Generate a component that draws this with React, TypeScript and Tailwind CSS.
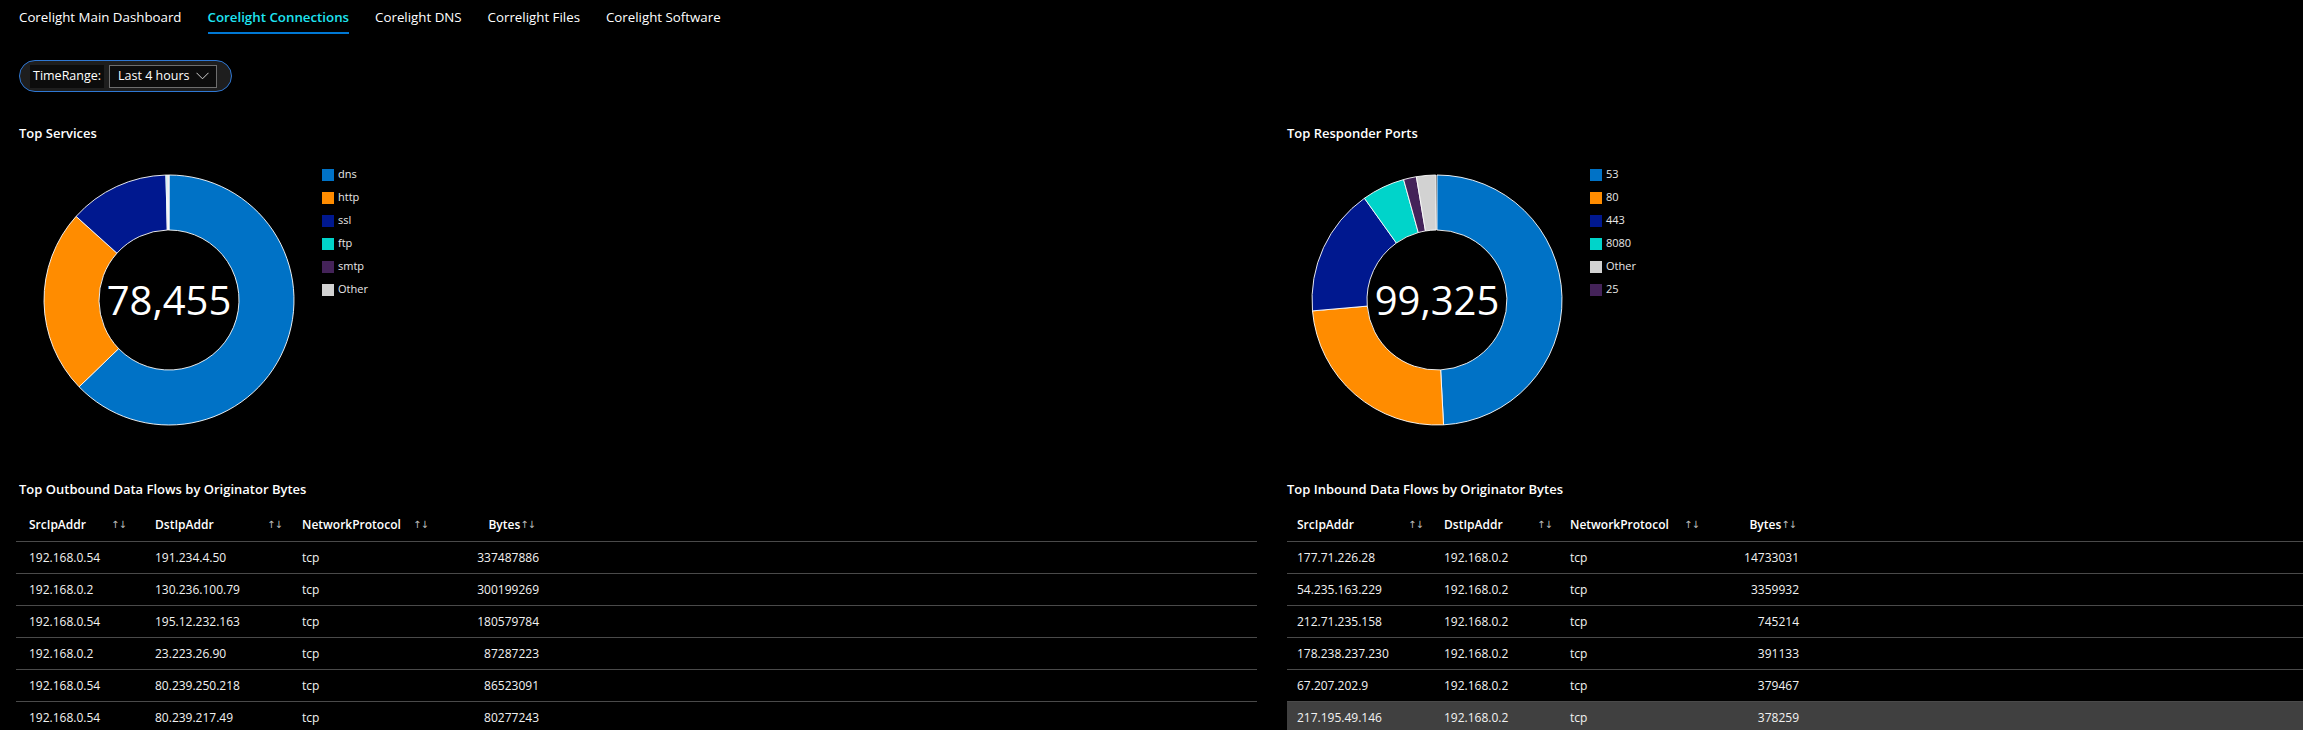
import React from 'react';

type Slice = { color: string; from: number; to: number };
type LegendItem = { label: string; color: string };
type Row = [string, string, string, string];

type Col = { w: number; pl: number; textW: number };

const tabs = [
  'Corelight Main Dashboard',
  'Corelight Connections',
  'Corelight DNS',
  'Correlight Files',
  'Corelight Software',
];

const servicesSlices: Slice[] = [
  { color: '#0072c6', from: 0, to: 226 },
  { color: '#ff8c00', from: 226, to: 312 },
  { color: '#00188f', from: 312, to: 358.6 },
  { color: '#00d4ca', from: 358.6, to: 359.1 },
  { color: '#442359', from: 359.1, to: 359.5 },
  { color: '#d2d2d2', from: 359.5, to: 360 },
];

const servicesLegend: LegendItem[] = [
  { label: 'dns', color: '#0072c6' },
  { label: 'http', color: '#ff8c00' },
  { label: 'ssl', color: '#00188f' },
  { label: 'ftp', color: '#00d4ca' },
  { label: 'smtp', color: '#442359' },
  { label: 'Other', color: '#d2d2d2' },
];

const portsSlices: Slice[] = [
  { color: '#0072c6', from: 0, to: 177 },
  { color: '#ff8c00', from: 177, to: 265 },
  { color: '#00188f', from: 265, to: 324.5 },
  { color: '#00d4ca', from: 324.5, to: 344.5 },
  { color: '#442359', from: 344.5, to: 350.5 },
  { color: '#d2d2d2', from: 350.5, to: 359.4 },
];

const portsLegend: LegendItem[] = [
  { label: '53', color: '#0072c6' },
  { label: '80', color: '#ff8c00' },
  { label: '443', color: '#00188f' },
  { label: '8080', color: '#00d4ca' },
  { label: 'Other', color: '#d2d2d2' },
  { label: '25', color: '#442359' },
];

const outboundRows: Row[] = [
  ['192.168.0.54', '191.234.4.50', 'tcp', '337487886'],
  ['192.168.0.2', '130.236.100.79', 'tcp', '300199269'],
  ['192.168.0.54', '195.12.232.163', 'tcp', '180579784'],
  ['192.168.0.2', '23.223.26.90', 'tcp', '87287223'],
  ['192.168.0.54', '80.239.250.218', 'tcp', '86523091'],
  ['192.168.0.54', '80.239.217.49', 'tcp', '80277243'],
];

const inboundRows: Row[] = [
  ['177.71.226.28', '192.168.0.2', 'tcp', '14733031'],
  ['54.235.163.229', '192.168.0.2', 'tcp', '3359932'],
  ['212.71.235.158', '192.168.0.2', 'tcp', '745214'],
  ['178.238.237.230', '192.168.0.2', 'tcp', '391133'],
  ['67.207.202.9', '192.168.0.2', 'tcp', '379467'],
  ['217.195.49.146', '192.168.0.2', 'tcp', '378259'],
];

// column widths measured off the screenshot
const outboundCols: Col[] = [
  { w: 127, pl: 13, textW: 82 },
  { w: 147, pl: 12, textW: 112 },
  { w: 152, pl: 12, textW: 111 },
];
const outboundBytes = { w: 103, headPr: 10, cellPr: 6 };

const inboundCols: Col[] = [
  { w: 145, pl: 10, textW: 111 },
  { w: 126, pl: 12, textW: 93 },
  { w: 152, pl: 12, textW: 114 },
];
const inboundBytes = { w: 92, headPr: 6, cellPr: 3 };

function pt(cx: number, cy: number, rad: number, deg: number) {
  const a = (deg * Math.PI) / 180;
  return `${(cx + rad * Math.sin(a)).toFixed(2)} ${(cy - rad * Math.cos(a)).toFixed(2)}`;
}

function arc(from: number, to: number) {
  const cx = 125, cy = 125, R = 125, r = 70;
  const large = to - from > 180 ? 1 : 0;
  return [
    `M ${pt(cx, cy, R, from)}`,
    `A ${R} ${R} 0 ${large} 1 ${pt(cx, cy, R, to)}`,
    `L ${pt(cx, cy, r, to)}`,
    `A ${r} ${r} 0 ${large} 0 ${pt(cx, cy, r, from)}`,
    'Z',
  ].join(' ');
}

function Donut({ slices, total }: { slices: Slice[]; total: string }) {
  return (
    <div className="relative w-[250px] h-[250px] shrink-0">
      <svg width="250" height="250" viewBox="0 0 250 250" className="overflow-visible">
        {slices.map((s, i) => (
          <path key={i} d={arc(s.from, s.to)} fill={s.color} stroke="#ffffff" strokeWidth="0.9" />
        ))}
      </svg>
      <div className="absolute inset-0 flex items-center justify-center text-[40px] leading-none text-white">
        {total}
      </div>
    </div>
  );
}

function Legend({ items }: { items: LegendItem[] }) {
  return (
    <div className="flex flex-col -mt-[12px] ml-[28px]">
      {items.map((it) => (
        <div key={it.label} className="flex items-center h-[23px] gap-[4px]">
          <span className="w-[12px] h-[12px]" style={{ backgroundColor: it.color }} />
          <span className="text-[11px] text-[#e8e8e8]">{it.label}</span>
        </div>
      ))}
    </div>
  );
}

function SortArrows() {
  return <span className="font-['DejaVu_Sans',sans-serif] text-[10px] text-[#bdbdbd] tracking-[-1px]">↑↓</span>;
}

function DataTable({
  rows,
  cols,
  bytes,
  highlightLast,
}: {
  rows: Row[];
  cols: Col[];
  bytes: { w: number; headPr: number; cellPr: number };
  highlightLast?: boolean;
}) {
  const heads = ['SrcIpAddr', 'DstIpAddr', 'NetworkProtocol'];
  return (
    <div className="w-[1241px]">
      <div className="flex h-[34px] items-center border-b border-[#4a4a4a]">
        {heads.map((h, i) => (
          <div key={h} className="flex items-center shrink-0" style={{ width: cols[i].w, paddingLeft: cols[i].pl }}>
            <span className="text-[12px] font-semibold text-white shrink-0" style={{ width: cols[i].textW }}>
              {h}
            </span>
            <SortArrows />
          </div>
        ))}
        <div className="flex items-center justify-end shrink-0" style={{ width: bytes.w, paddingRight: bytes.headPr }}>
          <span className="text-[12px] font-semibold text-white">Bytes</span>
          <SortArrows />
        </div>
      </div>
      {rows.map((r, ri) => (
        <div
          key={ri}
          className={`flex h-[32px] items-center border-b border-[#4a4a4a] text-[12px] text-[#f2f2f2] ${
            highlightLast && ri === rows.length - 1 ? 'bg-[#404040] border-transparent' : ''
          }`}
        >
          {r.slice(0, 3).map((c, ci) => (
            <div key={ci} className="shrink-0" style={{ width: cols[ci].w, paddingLeft: cols[ci].pl }}>
              {c}
            </div>
          ))}
          <div className="shrink-0 text-right" style={{ width: bytes.w, paddingRight: bytes.cellPr }}>
            {r[3]}
          </div>
        </div>
      ))}
    </div>
  );
}

function Column({
  chartTitle,
  slices,
  total,
  legend,
  tableTitle,
  rows,
  cols,
  bytes,
  highlightLast,
  tableShift,
  className,
}: {
  chartTitle: string;
  slices: Slice[];
  total: string;
  legend: LegendItem[];
  tableTitle: string;
  rows: Row[];
  cols: Col[];
  bytes: { w: number; headPr: number; cellPr: number };
  highlightLast?: boolean;
  tableShift: string;
  className: string;
}) {
  return (
    <div className={`flex flex-col shrink-0 w-[1270px] ${className}`}>
      <h2 className="h-[18px] leading-[18px] text-[13px] font-semibold text-white">{chartTitle}</h2>
      <div className="flex items-start mt-[33px] ml-[25px]">
        <Donut slices={slices} total={total} />
        <Legend items={legend} />
      </div>
      <h2 className="mt-[55px] h-[18px] leading-[18px] text-[13px] font-semibold text-white">{tableTitle}</h2>
      <div className={`mt-[10px] ${tableShift}`}>
        <DataTable rows={rows} cols={cols} bytes={bytes} highlightLast={highlightLast} />
      </div>
    </div>
  );
}

export default function App() {
  const active = 'Corelight Connections';
  return (
    <div className="w-[2303px] h-[730px] overflow-hidden bg-black text-white font-['Open_Sans',sans-serif]">
      <nav className="flex h-[34px] pl-[19px] gap-[26px] text-[13.3px]">
        {tabs.map((t) => (
          <div
            key={t}
            className={`pt-[8px] h-full leading-[18px] border-b-2 ${
              t === active ? 'border-[#0078d4] text-[#1fe4f2] font-semibold' : 'border-transparent text-white'
            }`}
          >
            {t}
          </div>
        ))}
      </nav>

      <div className="pl-[19px] mt-[26px]">
        <div className="inline-flex items-center h-[32px] w-[213px] rounded-full border border-[#2f78d4] bg-[#1e1e1e] pl-[10px] gap-[5px]">
          <div className="h-[23px] px-[3px] flex items-center bg-[#0c0c0c] text-[12.5px] text-white">TimeRange:</div>
          <div className="h-[23px] w-[108px] flex items-center justify-between pl-[8px] pr-[7px] border border-[#6e6e6e] bg-[#0c0c0c] text-[12.5px] text-white">
            <span>Last 4 hours</span>
            <svg width="13" height="8" viewBox="0 0 13 8" fill="none">
              <path d="M0.5 0.8 L6.5 6.8 L12.5 0.8" stroke="#d0d0d0" strokeWidth="1" />
            </svg>
          </div>
        </div>
      </div>

      <div className="flex mt-[32px]">
        <Column
          className="pl-[19px]"
          chartTitle="Top Services"
          slices={servicesSlices}
          total="78,455"
          legend={servicesLegend}
          tableTitle="Top Outbound Data Flows by Originator Bytes"
          rows={outboundRows}
          cols={outboundCols}
          bytes={outboundBytes}
          tableShift="-ml-[3px]"
        />
        <Column
          className="pl-[17px]"
          chartTitle="Top Responder Ports"
          slices={portsSlices}
          total="99,325"
          legend={portsLegend}
          tableTitle="Top Inbound Data Flows by Originator Bytes"
          rows={inboundRows}
          cols={inboundCols}
          bytes={inboundBytes}
          highlightLast
          tableShift=""
        />
      </div>
    </div>
  );
}
